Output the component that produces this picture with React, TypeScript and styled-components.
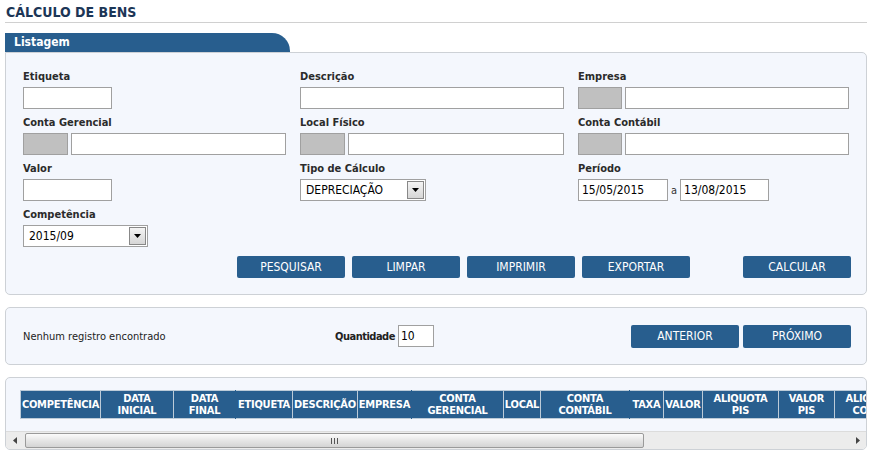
import React from 'react';
import styled, { createGlobalStyle } from 'styled-components';

const BLUE = '#285e8e';
const FONT = '"DejaVu Sans Condensed", "DejaVu Sans", sans-serif';

const GlobalStyle = createGlobalStyle`
    html, body {
        margin: 0;
        padding: 0;
        background: #ffffff;
    }
    body {
        font-family: ${FONT};
        color: #222;
    }
`;

interface HeadCol {
    label: React.ReactNode;
    w: number;
    open?: boolean;
}

const COLUMNS: HeadCol[] = [
    { label: 'COMPETÊNCIA', w: 80 },
    { label: <>DATA<br />INICIAL</>, w: 73 },
    { label: <>DATA<br />FINAL</>, w: 62, open: true },
    { label: 'ETIQUETA', w: 57 },
    { label: 'DESCRIÇÃO', w: 65 },
    { label: 'EMPRESA', w: 54, open: true },
    { label: <>CONTA<br />GERENCIAL</>, w: 92 },
    { label: 'LOCAL', w: 37 },
    { label: <>CONTA<br />CONTÁBIL</>, w: 89, open: true },
    { label: 'TAXA', w: 34 },
    { label: 'VALOR', w: 39 },
    { label: <>ALIQUOTA<br />PIS</>, w: 76 },
    { label: <>VALOR<br />PIS</>, w: 56 },
    { label: <>ALIQUOTA<br />COFINS</>, w: 76 },
    { label: <>VALOR<br />COFINS</>, w: 60 },
];

const TABLE_WIDTH = COLUMNS.reduce((sum, c) => sum + c.w, 0);

const Select: React.FC<{ value: string; w: number }> = ({ value, w }) => (
    <SelectBox $w={w}>
        <span>{value}</span>
        <SelectArrow>
            <svg width="7" height="4" viewBox="0 0 7 4">
                <path d="M0 0h7L3.5 4z" fill="#000" />
            </svg>
        </SelectArrow>
    </SelectBox>
);

const App: React.FC = () => {
    return (
        <>
            <GlobalStyle />
            <Page>
                <Title>CÁLCULO DE BENS</Title>
                <Tab>Listagem</Tab>
                <FilterPanel>
                    <FieldGrid>
                        <Field>
                            <Label>Etiqueta</Label>
                            <Input $w={89} />
                        </Field>
                        <Field>
                            <Label>Descrição</Label>
                            <Input $w={264} />
                        </Field>
                        <Field>
                            <Label>Empresa</Label>
                            <Inline>
                                <Lookup $w={44} />
                                <Input $w={224} />
                            </Inline>
                        </Field>

                        <Field>
                            <Label>Conta Gerencial</Label>
                            <Inline>
                                <Lookup $w={45} />
                                <Input $w={215} />
                            </Inline>
                        </Field>
                        <Field>
                            <Label>Local Físico</Label>
                            <Inline>
                                <Lookup $w={45} />
                                <Input $w={216} />
                            </Inline>
                        </Field>
                        <Field>
                            <Label>Conta Contábil</Label>
                            <Inline>
                                <Lookup $w={44} />
                                <Input $w={224} />
                            </Inline>
                        </Field>

                        <Field>
                            <Label>Valor</Label>
                            <Input $w={89} />
                        </Field>
                        <Field>
                            <Label>Tipo de Cálculo</Label>
                            <Select value="DEPRECIAÇÃO" w={126} />
                        </Field>
                        <Field>
                            <Label>Período</Label>
                            <Inline $gap={2}>
                                <Input $w={90} defaultValue="15/05/2015" />
                                <Sep>a</Sep>
                                <Input $w={89} defaultValue="13/08/2015" />
                            </Inline>
                        </Field>

                        <Field>
                            <Label>Competência</Label>
                            <Select value="2015/09" w={125} />
                        </Field>
                    </FieldGrid>

                    <ButtonRow>
                        <Button>PESQUISAR</Button>
                        <Button>LIMPAR</Button>
                        <Button>IMPRIMIR</Button>
                        <Button>EXPORTAR</Button>
                        <Button $push>CALCULAR</Button>
                    </ButtonRow>
                </FilterPanel>

                <PagerPanel>
                    <Message>Nenhum registro encontrado</Message>
                    <Quantity>
                        <strong>Quantidade</strong>
                        <Input $w={36} defaultValue="10" />
                    </Quantity>
                    <PagerButtons>
                        <Button>ANTERIOR</Button>
                        <Button>PRÓXIMO</Button>
                    </PagerButtons>
                </PagerPanel>

                <GridPanel>
                    <Viewport>
                        <HeadTable $w={TABLE_WIDTH}>
                            <thead>
                                <tr>
                                    {COLUMNS.map((col, i) => (
                                        <HeadCell key={i} $w={col.w} $open={col.open}>
                                            {col.label}
                                        </HeadCell>
                                    ))}
                                </tr>
                            </thead>
                        </HeadTable>
                    </Viewport>
                    <ScrollBar>
                        <ScrollArrow>
                            <svg width="4" height="7" viewBox="0 0 4 7">
                                <path d="M4 0v7L0 3.5z" fill="#444" />
                            </svg>
                        </ScrollArrow>
                        <Track>
                            <Thumb>
                                <Grip />
                            </Thumb>
                        </Track>
                        <ScrollArrow>
                            <svg width="4" height="7" viewBox="0 0 4 7">
                                <path d="M0 0v7L4 3.5z" fill="#444" />
                            </svg>
                        </ScrollArrow>
                    </ScrollBar>
                </GridPanel>
            </Page>
        </>
    );
};

export default App;

const Page = styled.div`
    width: 862px;
    padding: 0 5px;
`;

const Title = styled.h1`
    margin: 0;
    padding: 4px 0 2px 1px;
    font-size: 14px;
    line-height: 16px;
    font-weight: 700;
    color: #1c3656;
    border-bottom: 1px solid #d0d0d0;
`;

const Tab = styled.div`
    margin-top: 10px;
    width: 276px;
    height: 19px;
    padding-left: 9px;
    background: ${BLUE};
    border-radius: 0 18px 0 0;
    color: #fff;
    font-size: 12px;
    font-weight: 700;
    line-height: 19px;
`;

const Panel = styled.div`
    background: #f4f7fd;
    border: 1px solid #cdd1d6;
    border-radius: 5px;
`;

const FilterPanel = styled(Panel)`
    border-radius: 0 5px 5px 5px;
    padding: 17px 15px 16px 17px;
`;

const FieldGrid = styled.div`
    display: grid;
    grid-template-columns: 277px 278px 1fr;
    row-gap: 7px;
`;

const Field = styled.div`
    display: flex;
    flex-direction: column;
    align-items: flex-start;
`;

const Label = styled.label`
    font-size: 11px;
    line-height: 13px;
    font-weight: 700;
    color: #2b2b2b;
    margin-bottom: 4px;
`;

const Inline = styled.div<{ $gap?: number }>`
    display: flex;
    align-items: center;
    gap: ${(p) => p.$gap ?? 3}px;
`;

const Input = styled.input<{ $w: number }>`
    box-sizing: border-box;
    width: ${(p) => p.$w}px;
    height: 22px;
    margin: 0;
    padding: 0 3px;
    border: 1px solid #a0a0a0;
    background: #fff;
    font-family: ${FONT};
    font-size: 12px;
    color: #000;
    outline: none;
`;

const Lookup = styled.div<{ $w: number }>`
    box-sizing: border-box;
    width: ${(p) => p.$w}px;
    height: 22px;
    background: #c0c0c0;
    border: 1px solid #a0a0a0;
`;

const Sep = styled.span`
    padding: 0 1px;
    font-size: 11px;
    color: #333;
`;

const SelectBox = styled.div<{ $w: number }>`
    box-sizing: border-box;
    width: ${(p) => p.$w}px;
    height: 22px;
    display: flex;
    align-items: center;
    justify-content: space-between;
    padding: 0 1px 0 5px;
    border: 1px solid #a0a0a0;
    background: #fff;
    font-size: 12px;
    color: #000;
`;

const SelectArrow = styled.div`
    box-sizing: border-box;
    width: 17px;
    height: 18px;
    display: flex;
    align-items: center;
    justify-content: center;
    border: 1px solid #888;
    background: linear-gradient(#f4f4f4, #d6d6d6);
`;

const ButtonRow = styled.div`
    display: flex;
    justify-content: flex-end;
    gap: 7px;
    margin-top: 9px;
`;

const Button = styled.button<{ $push?: boolean }>`
    width: 108px;
    height: 22px;
    margin-left: ${(p) => (p.$push ? '46px' : '0')};
    padding: 0;
    border: none;
    border-radius: 2px;
    background: ${BLUE};
    color: #fff;
    font-family: ${FONT};
    font-size: 12px;
    cursor: pointer;
`;

const PagerPanel = styled(Panel)`
    margin-top: 12px;
    height: 56px;
    display: flex;
    align-items: center;
    padding: 0 15px 0 17px;
`;

const Message = styled.span`
    flex: 0 0 312px;
    font-size: 11px;
    color: #222;
`;

const Quantity = styled.div`
    display: flex;
    align-items: center;
    gap: 3px;
    font-size: 11px;
    color: #222;

    strong {
        letter-spacing: -0.5px;
    }

    input {
        padding: 0 2px;
    }
`;

const PagerButtons = styled.div`
    margin-left: auto;
    display: flex;
    gap: 4px;

    button {
        height: 23px;
    }
`;

const GridPanel = styled(Panel)`
    margin-top: 12px;
    overflow: hidden;
`;

const Viewport = styled.div`
    overflow: hidden;
    padding: 12px 0 12px 14px;
`;

const HeadTable = styled.table<{ $w: number }>`
    width: ${(p) => p.$w}px;
    border-collapse: collapse;
    table-layout: fixed;
    border: 1px solid #bccbd8;
`;

const HeadCell = styled.th<{ $w: number; $open?: boolean }>`
    box-sizing: border-box;
    width: ${(p) => p.$w}px;
    height: 28px;
    padding: 0;
    overflow: hidden;
    background: ${BLUE};
    color: #fff;
    font-size: 11px;
    line-height: 12px;
    letter-spacing: -0.25px;
    font-weight: 700;
    text-align: center;
    white-space: nowrap;
    border-right: 1px solid ${(p) => (p.$open ? BLUE : '#bccbd8')};
`;

const ScrollBar = styled.div`
    display: flex;
    height: 17px;
    background: #ececec;
    border-top: 1px solid #dcdcdc;
`;

const ScrollArrow = styled.div`
    width: 17px;
    display: flex;
    align-items: center;
    justify-content: center;
    flex: none;
`;

const Track = styled.div`
    flex: 1;
    display: flex;
    align-items: center;
    padding-left: 2px;
`;

const Thumb = styled.div`
    box-sizing: border-box;
    width: 619px;
    height: 15px;
    border: 1px solid #9a9a9a;
    border-radius: 2px;
    background: linear-gradient(#fbfbfb, #e6e6e6 50%, #d4d4d4);
    display: flex;
    align-items: center;
    justify-content: center;
`;

const Grip = styled.div`
    width: 7px;
    height: 6px;
    background: repeating-linear-gradient(90deg, #555 0 1px, transparent 1px 3px);
`;
